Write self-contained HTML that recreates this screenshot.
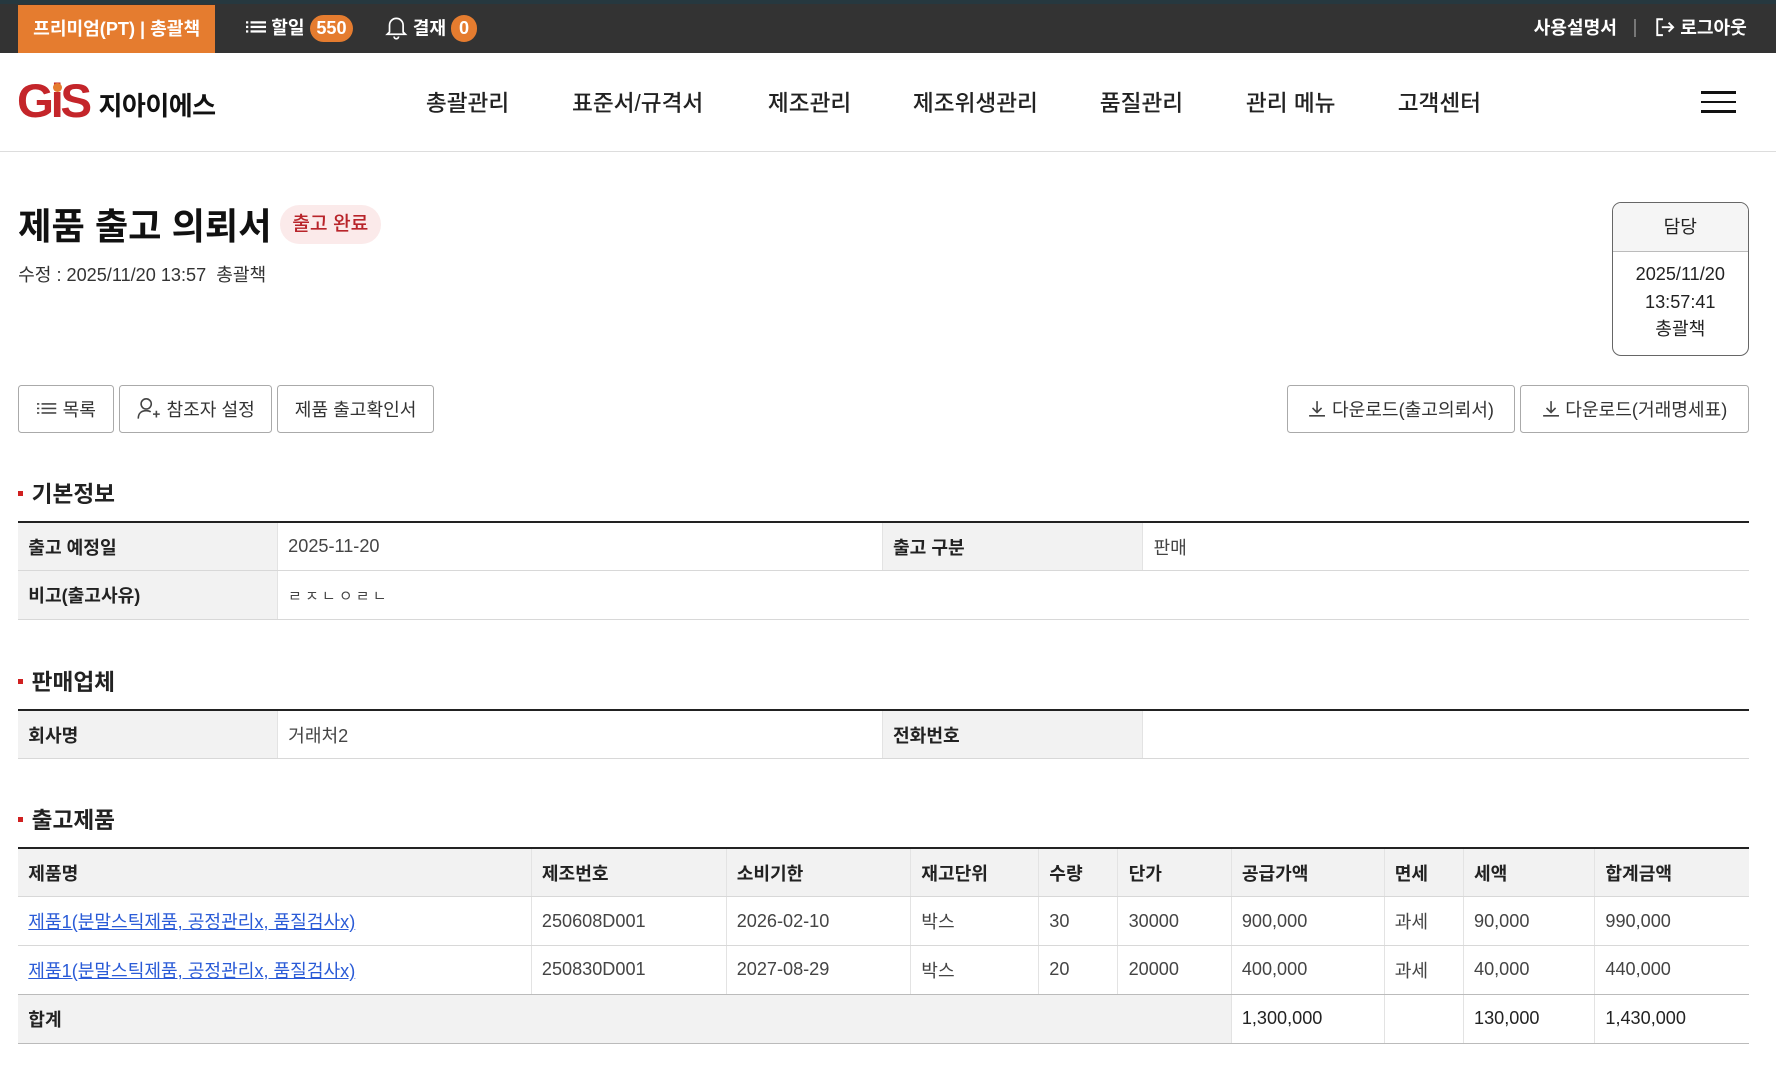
<!DOCTYPE html>
<html><head><meta charset="utf-8">
<style>
*{box-sizing:border-box;margin:0;padding:0}
html,body{width:1776px;height:1071px;overflow:hidden;background:#fff}
#w{zoom:1.13265;width:1568px;height:946px;position:relative;font-family:"Liberation Sans","Noto Sans CJK KR",sans-serif;color:#222}
.a{position:absolute;white-space:nowrap}
.top{position:absolute;left:0;top:0;width:1568px;height:47px;background:#333;border-top:4px solid #26383f}
.badge{display:inline-block;background:#e57c2f;color:#fff;border-radius:12px;font-weight:bold;height:24px;line-height:24px;padding:0 6px;font-size:16px}
.nav{top:75px;font-size:20px;font-weight:500;color:#222}
.btn{position:absolute;top:340px;height:42px;border:1px solid #aaa;border-radius:3px;font-size:16px;color:#333;display:flex;align-items:center;justify-content:center;gap:5px;background:#fff}
.sec{position:absolute;left:16px;font-size:20px;font-weight:bold;color:#222}
.sec:before{content:"";display:inline-block;width:4px;height:4px;background:#d02020;margin-right:8px;vertical-align:middle;position:relative;top:-2px}
table{position:absolute;left:16px;width:1528px;border-collapse:collapse;border-top:2px solid #222;table-layout:fixed}
td{height:43px;border-bottom:1px solid #d8d8d8;border-left:1px solid #e3e3e3;padding:0 9px;font-size:16px;color:#444}
td:first-child{border-left:none}
td.l{background:#f2f2f2;font-weight:bold;color:#222}
tr.h td{background:#f2f2f2;font-weight:bold;color:#222}
tr.t td{border-bottom:1px solid #bbb}
a{color:#2a5bd7;text-decoration:underline}
</style></head><body><div id="w">
<div class="top"></div>
<div class="a" style="left:16px;top:4px;width:174px;height:43px;background:#e57c2f;color:#fff;font-weight:bold;font-size:16px;line-height:43px;text-align:center">프리미엄(PT) | 총괄책</div>
<div class="a" style="left:217px;top:13px;color:#fff;font-weight:bold;font-size:16px;line-height:24px">
<svg width="18" height="14" viewBox="0 0 18 14" style="vertical-align:-1px"><g fill="#fff"><rect x="0" y="2" width="2" height="2"/><rect x="0" y="6" width="2" height="2"/><rect x="0" y="10" width="2" height="2"/><rect x="4" y="2" width="14" height="2"/><rect x="4" y="6" width="14" height="2"/><rect x="4" y="10" width="14" height="2"/></g></svg> 할일 <span class="badge">550</span></div>
<div class="a" style="left:340px;top:13px;color:#fff;font-weight:bold;font-size:16px;line-height:24px">
<svg width="20" height="22" viewBox="0 0 20 22" style="vertical-align:-5px"><path d="M4 15V9a6 6 0 0 1 12 0v6l2 2H2z M8 19a2 2 0 0 0 4 0" fill="none" stroke="#fff" stroke-width="1.5"/></svg> 결재 <span class="badge" style="padding:0 7px">0</span></div>
<div class="a" style="left:1354px;top:13px;color:#fff;font-weight:bold;font-size:16px;line-height:24px">사용설명서</div>
<div class="a" style="left:1443px;top:17px;width:1px;height:16px;background:#777"></div>
<div class="a" style="left:1461px;top:13px;color:#fff;font-weight:bold;font-size:16px;line-height:24px"><svg width="18" height="18" viewBox="0 0 18 18" style="vertical-align:-3px"><path d="M7 2H2v14h5 M6 9h10 M12 5l4 4-4 4" fill="none" stroke="#fff" stroke-width="1.7"/></svg> 로그아웃</div>

<div class="a" style="left:0;top:133px;width:1568px;height:1px;background:#ddd"></div>
<div class="a" style="left:15px;top:66px;font-size:42px;font-weight:900;color:#c4252a;letter-spacing:-3px;font-family:'Liberation Sans',sans-serif;line-height:48px">G<span style="position:relative">i<span style="position:absolute;left:2px;top:7px;width:8px;height:8px;border-radius:50%;background:#e57c2f"></span></span>S</div>
<div class="a" style="left:87px;top:75px;font-size:23px;font-weight:bold;color:#111;letter-spacing:-0.5px">지아이에스</div>
<div class="a nav" style="left:376px">총괄관리</div>
<div class="a nav" style="left:505px">표준서/규격서</div>
<div class="a nav" style="left:678px">제조관리</div>
<div class="a nav" style="left:806px">제조위생관리</div>
<div class="a nav" style="left:971px">품질관리</div>
<div class="a nav" style="left:1100px">관리 메뉴</div>
<div class="a nav" style="left:1234px">고객센터</div>
<div class="a" style="left:1502px;top:80px;width:31px;height:3px;background:#111"></div>
<div class="a" style="left:1502px;top:89px;width:31px;height:2px;background:#111"></div>
<div class="a" style="left:1502px;top:97px;width:31px;height:3px;background:#111"></div>

<div class="a" style="left:16px;top:175px;font-size:32px;font-weight:bold;color:#111">제품 출고 의뢰서</div>
<div class="a" style="left:247px;top:181px;height:34px;padding:0 11px;border-radius:17px;background:#fbeaea;color:#b8242a;font-size:17px;font-weight:500;line-height:36px">출고 완료</div>
<div class="a" style="left:16px;top:230px;font-size:16px;color:#333">수정 : 2025/11/20 13:57 &nbsp;총괄책</div>
<div class="a" style="left:1423px;top:178px;width:121px;height:136px;border:1px solid #666;border-radius:8px;overflow:hidden;text-align:center;font-size:16px;color:#222">
<div style="height:44px;line-height:43px;background:#f5f5f5;border-bottom:1px solid #bbb">담당</div>
<div style="line-height:24px;padding-top:8px">2025/11/20<br>13:57:41<br>총괄책</div></div>

<div class="btn" style="left:16px;width:85px"><svg width="18" height="12" viewBox="0 0 18 12"><g fill="#444"><rect x="0" y="1" width="2" height="1.4"/><rect x="0" y="5" width="2" height="1.4"/><rect x="0" y="9" width="2" height="1.4"/><rect x="4" y="1" width="13" height="1.4"/><rect x="4" y="5" width="13" height="1.4"/><rect x="4" y="9" width="13" height="1.4"/></g></svg>목록</div>
<div class="btn" style="left:105px;width:135px"><svg width="22" height="22" viewBox="0 0 22 22"><circle cx="9" cy="7" r="4.5" fill="none" stroke="#444" stroke-width="1.4"/><path d="M2 20c0-5 3-7 7-7 2 0 3 .4 4 1 M15 16h6 M18 13v6" fill="none" stroke="#444" stroke-width="1.4"/></svg>참조자 설정</div>
<div class="btn" style="left:245px;width:138px">제품 출고확인서</div>
<div class="btn" style="left:1136px;width:202px"><svg width="16" height="16" viewBox="0 0 16 16"><path d="M8 1v10 M4 7l4 4 4-4 M1 14h14" fill="none" stroke="#444" stroke-width="1.4"/></svg>다운로드(출고의뢰서)</div>
<div class="btn" style="left:1342px;width:202px"><svg width="16" height="16" viewBox="0 0 16 16"><path d="M8 1v10 M4 7l4 4 4-4 M1 14h14" fill="none" stroke="#444" stroke-width="1.4"/></svg>다운로드(거래명세표)</div>

<div class="sec" style="top:420px">기본정보</div>
<table style="top:460px"><colgroup><col style="width:229px"><col style="width:534px"><col style="width:230px"><col></colgroup>
<tr><td class="l">출고 예정일</td><td>2025-11-20</td><td class="l">출고 구분</td><td>판매</td></tr>
<tr><td class="l">비고(출고사유)</td><td colspan="3" style="letter-spacing:3px;font-size:13px">ㄹㅈㄴㅇㄹㄴ</td></tr></table>

<div class="sec" style="top:586px">판매업체</div>
<table style="top:626px"><colgroup><col style="width:229px"><col style="width:534px"><col style="width:230px"><col></colgroup>
<tr><td class="l">회사명</td><td>거래처2</td><td class="l">전화번호</td><td></td></tr></table>

<div class="sec" style="top:708px">출고제품</div>
<table style="top:748px"><colgroup><col style="width:453px"><col style="width:172px"><col style="width:163px"><col style="width:113px"><col style="width:70px"><col style="width:100px"><col style="width:135px"><col style="width:70px"><col style="width:116px"><col></colgroup>
<tr class="h"><td>제품명</td><td>제조번호</td><td>소비기한</td><td>재고단위</td><td>수량</td><td>단가</td><td>공급가액</td><td>면세</td><td>세액</td><td>합계금액</td></tr>
<tr><td><a>제품1(분말스틱제품, 공정관리x, 품질검사x)</a></td><td>250608D001</td><td>2026-02-10</td><td>박스</td><td>30</td><td>30000</td><td>900,000</td><td>과세</td><td>90,000</td><td>990,000</td></tr>
<tr class="t"><td><a>제품1(분말스틱제품, 공정관리x, 품질검사x)</a></td><td>250830D001</td><td>2027-08-29</td><td>박스</td><td>20</td><td>20000</td><td>400,000</td><td>과세</td><td>40,000</td><td>440,000</td></tr>
<tr class="t"><td class="l" colspan="6">합계</td><td style="color:#222">1,300,000</td><td></td><td style="color:#222">130,000</td><td style="color:#222">1,430,000</td></tr></table>
</div></body></html>
